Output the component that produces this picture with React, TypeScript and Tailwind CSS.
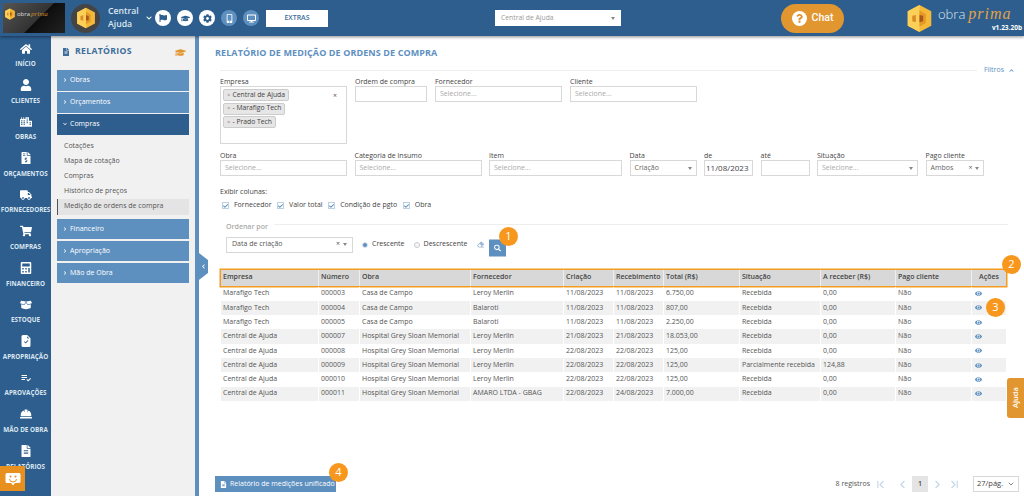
import type { ReactNode } from "react";
import {
  FaHome, FaUser, FaCity, FaFileInvoiceDollar, FaTruck, FaShoppingCart, FaCalculator, FaBoxOpen,
  FaFileAlt, FaHardHat, FaGraduationCap, FaFlag, FaCog, FaMobileAlt, FaDesktop, FaEye, FaSearch,
  FaEraser, FaQuestion, FaChevronDown, FaChevronUp, FaChevronRight, FaChevronLeft, FaCheck,
} from "react-icons/fa";
import { BsFileEarmarkCheckFill } from "react-icons/bs";
import { MdPlaylistAddCheck } from "react-icons/md";
import { LuChevronFirst, LuChevronLast, LuChevronLeft, LuChevronRight, LuChevronDown } from "react-icons/lu";

const navItems = [
  { label: "INÍCIO", icon: <FaHome /> },
  { label: "CLIENTES", icon: <FaUser /> },
  { label: "OBRAS", icon: <FaCity /> },
  { label: "ORÇAMENTOS", icon: <FaFileInvoiceDollar /> },
  { label: "FORNECEDORES", icon: <FaTruck /> },
  { label: "COMPRAS", icon: <FaShoppingCart /> },
  { label: "FINANCEIRO", icon: <FaCalculator /> },
  { label: "ESTOQUE", icon: <FaBoxOpen /> },
  { label: "APROPRIAÇÃO", icon: <BsFileEarmarkCheckFill /> },
  { label: "APROVAÇÕES", icon: <MdPlaylistAddCheck /> },
  { label: "MÃO DE OBRA", icon: <FaHardHat /> },
  { label: "RELATÓRIOS", icon: <FaFileAlt /> },
];

const rows = [
  ["Marafigo Tech", "000003", "Casa de Campo", "Leroy Merlin", "11/08/2023", "11/08/2023", "6.750,00", "Recebida", "0,00", "Não"],
  ["Marafigo Tech", "000004", "Casa de Campo", "Balaroti", "11/08/2023", "11/08/2023", "807,00", "Recebida", "0,00", "Não"],
  ["Marafigo Tech", "000005", "Casa de Campo", "Balaroti", "11/08/2023", "11/08/2023", "2.250,00", "Recebida", "0,00", "Não"],
  ["Central de Ajuda", "000007", "Hospital Grey Sloan Memorial", "Leroy Merlin", "21/08/2023", "21/08/2023", "18.053,00", "Recebida", "0,00", "Não"],
  ["Central de Ajuda", "000008", "Hospital Grey Sloan Memorial", "Leroy Merlin", "22/08/2023", "22/08/2023", "125,00", "Recebida", "0,00", "Não"],
  ["Central de Ajuda", "000009", "Hospital Grey Sloan Memorial", "Leroy Merlin", "22/08/2023", "22/08/2023", "125,00", "Parcialmente recebida", "124,88", "Não"],
  ["Central de Ajuda", "000010", "Hospital Grey Sloan Memorial", "Leroy Merlin", "22/08/2023", "22/08/2023", "125,00", "Recebida", "0,00", "Não"],
  ["Central de Ajuda", "000011", "Hospital Grey Sloan Memorial", "AMARO LTDA - GBAG", "22/08/2023", "24/08/2023", "7.000,00", "Recebida", "0,00", "Não"],
];

const columns = ["Empresa", "Número", "Obra", "Fornecedor", "Criação", "Recebimento", "Total (R$)", "Situação", "A receber (R$)", "Pago cliente"];

const tableGrid = "grid grid-cols-[98px_41px_111px_93px_50px_50px_76px_81px_75px_76px_34px]";

function Logo({ className }: { className: string }) {
  return (
    <svg viewBox="0 0 32 32" className={className}>
      <polygon points="16,1 29,8 29,24 16,31 3,24 3,8" fill="#f5b93a" />
      <polygon points="16,1 16,31 3,24 3,8" fill="#fbcf58" />
      <polygon points="16,7 23,11 23,21 16,25" fill="#e59a26" />
      <polygon points="16,12 20,13 20,19 16,20" fill="#a9581c" />
      <polygon points="8,13 12,12 12,20 8,19" fill="#d98c25" />
    </svg>
  );
}

function Badge({ n, className }: { n: number; className: string }) {
  return (
    <div className={`absolute flex h-[19px] w-[19px] items-center justify-center rounded-full bg-[#f7971d] text-[11px] text-white ${className}`}>
      {n}
    </div>
  );
}

function Field({ label, width, children }: { label: string; width: string; children?: ReactNode }) {
  return (
    <div className={`flex flex-col ${width}`}>
      <span className="h-[11px] text-[7px] leading-[11px] text-[#444]">{label}</span>
      <div className="mt-[-1px] flex h-[16px] items-center justify-between border border-[#d8d8d8] bg-white px-[4px] text-[7px] text-[#aaa]">
        {children}
      </div>
    </div>
  );
}

function Caret() {
  return <span className="h-0 w-0 border-x-[2px] border-t-[3px] border-x-transparent border-t-[#888]" />;
}

function Tag({ children }: { children: ReactNode }) {
  return (
    <span className="flex h-[12px] w-fit items-center gap-[2px] rounded-[2px] border border-[#ccc] bg-[#e6e6e6] px-[3px] text-[6.8px] text-[#444]">
      <span className="text-[6px] text-[#888]">×</span>
      {children}
    </span>
  );
}

function Accordion({ label, open }: { label: string; open?: boolean }) {
  return (
    <div className={`flex h-[20.5px] items-center gap-[3px] px-[6px] text-[7px] text-white ${open ? "bg-[#2d5e8e]" : "bg-[#5e90bf]"}`}>
      {open ? <FaChevronDown className="text-[4px]" /> : <FaChevronRight className="text-[4px]" />}
      {label}
    </div>
  );
}

function Check({ label }: { label: string }) {
  return (
    <span className="flex items-center gap-[5px]">
      <span className="flex h-[7px] w-[7px] items-center justify-center border border-[#bcd0e4] bg-white text-[6px] text-[#5e90bf]">
        <FaCheck />
      </span>
      {label}
    </span>
  );
}

export default function App() {
  return (
    <div className="relative flex h-[496px] w-[1024px] flex-col overflow-hidden bg-white font-['Open_Sans',sans-serif]">
      <header className="z-10 flex h-[36px] shrink-0 items-center bg-[#2d5e8e] shadow-[0_1px_3px_rgba(0,0,0,0.45)]">
        <div className="ml-[3px] flex h-[30px] w-[62px] items-center gap-[1px] bg-[linear-gradient(135deg,#555_0%,#333_55%,#0d0d0d_56%,#222_100%)] px-[1px] pb-[8px]">
          <Logo className="h-[12px] w-[12px]" />
          <span className="text-[6px] text-[#ddd]">obra</span>
          <span className="font-['Liberation_Serif',serif] text-[7px] italic text-[#c98a2b]">prima</span>
        </div>
        <div className="ml-[6px] flex h-[29px] w-[29px] items-center justify-center rounded-full bg-[#444]">
          <Logo className="h-[22px] w-[22px]" />
        </div>
        <div className="ml-[8px] w-[38px] text-[8.7px] leading-[13px] font-semibold text-[#dbe6f0]">Central Ajuda</div>
        <FaChevronDown className="text-[6px] text-white" />
        <div className="ml-[3px] flex items-center gap-[6px]">
          <span className="flex h-[16px] w-[16px] items-center justify-center rounded-full bg-white text-[8px] text-[#2d5e8e]"><FaFlag /></span>
          <span className="flex h-[16px] w-[16px] items-center justify-center rounded-full bg-white text-[9px] text-[#2d5e8e]"><FaGraduationCap /></span>
          <span className="flex h-[16px] w-[16px] items-center justify-center rounded-full bg-white text-[9px] text-[#2d5e8e]"><FaCog /></span>
          <span className="flex h-[16px] w-[16px] items-center justify-center rounded-full bg-[#5e90bf] text-[9px] text-white"><FaMobileAlt /></span>
          <span className="flex h-[16px] w-[16px] items-center justify-center rounded-full bg-[#5e90bf] text-[9px] text-white"><FaDesktop /></span>
        </div>
        <div className="ml-[7px] flex h-[17px] w-[62px] items-center justify-center bg-white text-[7px] font-semibold text-[#3d6d9a]">EXTRAS</div>
        <div className="ml-[167px] flex h-[16px] w-[126px] items-center justify-between bg-white px-[6px] text-[6.8px] text-[#999]">
          Central de Ajuda
          <Caret />
        </div>
        <div className="ml-[160px] flex h-[29px] w-[63px] items-center justify-center gap-[5px] rounded-full bg-[#e2962f] font-['Roboto',sans-serif] text-[10.5px] font-medium text-white">
          <span className="flex h-[15px] w-[15px] items-center justify-center rounded-full bg-white text-[9px] text-[#e2962f]"><FaQuestion /></span>
          Chat
        </div>
        <Logo className="ml-[61px] h-[29px] w-[29px]" />
        <div className="ml-[4px] flex w-[84px] flex-col items-end">
          <div className="flex h-[20px] w-full items-center">
            <span className="text-[13px] leading-none font-light text-[#dbe6f0]">obra</span>
            <span className="ml-[3px] font-['Liberation_Serif',serif] text-[16px] leading-none tracking-[1px] text-[#e2a24a] italic">prima</span>
          </div>
          <span className="text-[6.5px] leading-[8px] font-bold text-white">v1.23.20b</span>
        </div>
      </header>

      <div className="relative flex min-h-0 flex-1">
        <nav className="flex w-[51px] shrink-0 flex-col overflow-hidden bg-[#2d5e8e] pt-[3px]">
          {navItems.map((item) => (
            <div key={item.label} className="flex h-[36.6px] shrink-0 flex-col items-center justify-start">
              <span className="flex h-[19px] items-center text-[12px] text-white">{item.icon}</span>
              <span className="text-[6.3px] leading-[11px] font-bold whitespace-nowrap text-[#dbe6f0]">{item.label}</span>
            </div>
          ))}
        </nav>

        <aside className="w-[144px] shrink-0 bg-[#f1f1f1] px-[6px]">
          <div className="flex h-[34px] items-center justify-between pr-[3px] pb-[2px] pl-[5px]">
            <span className="flex items-center gap-[5px] text-[8.7px] font-bold tracking-[0.3px] text-[#3d6d9a]">
              <FaFileAlt className="text-[8px]" />
              RELATÓRIOS
            </span>
            <FaGraduationCap className="text-[11px] text-[#e2962f]" />
          </div>
          <div className="flex flex-col gap-[1.5px]">
            <Accordion label="Obras" />
            <Accordion label="Orçamentos" />
            <Accordion label="Compras" open />
          </div>
          <div className="mt-[4px] flex flex-col text-[7px] text-[#555]">
            <span className="flex h-[15px] items-center pl-[7px]">Cotações</span>
            <span className="flex h-[15px] items-center pl-[7px]">Mapa de cotação</span>
            <span className="flex h-[15px] items-center pl-[7px]">Compras</span>
            <span className="flex h-[15px] items-center pl-[7px]">Histórico de preços</span>
            <span className="flex h-[16px] items-center border-l border-[#555] bg-[#e4e4e4] pl-[6px]">Medição de ordens de compra</span>
          </div>
          <div className="mt-[4px] flex flex-col gap-[1.5px]">
            <Accordion label="Financeiro" />
            <Accordion label="Apropriação" />
            <Accordion label="Mão de Obra" />
          </div>
        </aside>

        <div className="w-[4px] shrink-0 bg-[#5e90bf]" />

        <main className="relative min-w-0 flex-1 px-[16px] text-[#555]">
          <h1 className="pt-[11px] text-[9px] leading-[12px] font-bold tracking-[0.1px] text-[#5e90bf]">RELATÓRIO DE MEDIÇÃO DE ORDENS DE COMPRA</h1>
          <div className="mt-[6px] mr-[-6px] ml-[5px] flex h-[10px] items-center">
            <div className="h-px flex-1 bg-[#eee]" />
            <span className="ml-[7px] flex items-center gap-[5px] text-[7px] text-[#5e90bf]">
              Filtros <FaChevronUp className="text-[5px]" />
            </span>
          </div>

          <div className="mt-[1px] ml-[5px] flex gap-[8px]">
            <div className="flex w-[127px] flex-col">
              <span className="h-[11px] text-[7px] leading-[11px] text-[#444]">Empresa</span>
              <div className="relative mt-[-1px] flex h-[58px] flex-col gap-[1.5px] border border-[#d8d8d8] p-[2px]">
                <Tag>Central de Ajuda</Tag>
                <Tag>- Marafigo Tech</Tag>
                <Tag>- Prado Tech</Tag>
                <span className="absolute top-[4px] right-[9px] text-[7px] text-[#555]">×</span>
              </div>
            </div>
            <Field label="Ordem de compra" width="w-[72px]" />
            <Field label="Fornecedor" width="w-[127px]">Selecione...</Field>
            <Field label="Cliente" width="w-[127px]">Selecione...</Field>
          </div>

          <div className="mt-[6px] ml-[5px] flex gap-[7.5px]">
            <Field label="Obra" width="w-[127px]">Selecione...</Field>
            <Field label="Categoria de insumo" width="w-[127px]">Selecione...</Field>
            <Field label="Item" width="w-[133px]">Selecione...</Field>
            <Field label="Data" width="w-[67px]"><span className="text-[#666]">Criação</span> <Caret /></Field>
            <Field label="de" width="w-[49px]"><span className="-mx-[3px] text-[8px] whitespace-nowrap text-[#444]">11/08/2023</span></Field>
            <Field label="até" width="w-[49px]" />
            <Field label="Situação" width="w-[101px]">Selecione... <Caret /></Field>
            <Field label="Pago cliente" width="w-[58px]">
              <span className="text-[#666]">Ambos</span>
              <span className="flex items-center gap-[2px] text-[#666]"><span className="text-[7px]">×</span><Caret /></span>
            </Field>
          </div>

          <div className="mt-[10px] ml-[5px] text-[7px] leading-[11px] text-[#444]">Exibir colunas:</div>
          <div className="mt-[3px] ml-[7px] flex h-[11px] items-center gap-[5.5px] text-[7px] text-[#444]">
            <Check label="Fornecedor" />
            <Check label="Valor total" />
            <Check label="Condição de pgto" />
            <Check label="Obra" />
          </div>

          <div className="mt-[9.5px] ml-[11px] flex h-[11px] items-center">
            <span className="text-[7px] leading-[11px] font-semibold text-[#aaa]">Ordenar por</span>
            <div className="ml-[6px] h-px flex-1 translate-y-[-2px] bg-[#eee]" />
          </div>
          <div className="mt-[5px] ml-[11px] flex h-[16px] items-center text-[7px] text-[#444]">
            <div className="flex h-[16px] w-[127px] items-center justify-between border border-[#d8d8d8] px-[5px] text-[#555]">
              Data de criação
              <span className="flex items-center gap-[3px]"><span className="text-[7px]">×</span><Caret /></span>
            </div>
            <span className="ml-[9px] h-[6px] w-[6px] rounded-full border-[1.5px] border-[#dde6ef] bg-[#5e90bf]" />
            <span className="ml-[4px]">Crescente</span>
            <span className="ml-[9px] h-[6px] w-[6px] rounded-full border border-[#ccc] bg-[#f5f5f5]" />
            <span className="ml-[4px]">Descrescente</span>
            <FaEraser className="ml-[10px] text-[7px] text-[#9db9d6]" />
            <div className="ml-[5px] flex h-[17px] w-[17px] translate-y-[3.5px] items-center justify-center bg-[#5e90bf] text-[7px] text-white"><FaSearch /></div>
          </div>

          <div className="mt-[17px] ml-[6px] w-[785px] text-[7px] text-[#555]">
            <div className={`${tableGrid} h-[16px] items-center bg-[#d8d8d8] font-semibold text-[#444] shadow-[0_0_0_1.5px_#f39c1f]`}>
              {columns.map((c) => (
                <span key={c} className="flex h-full items-center border-r border-white/60 pl-[2px] whitespace-nowrap">{c}</span>
              ))}
              <span className="text-center">Ações</span>
            </div>
            <div className="pt-[1px]">
              {rows.map((row, i) => (
                <div key={row[1]} className={`${tableGrid} h-[14.3px] items-center ${i % 2 ? "bg-[#f1f1f1]" : ""}`}>
                  {row.map((cell, j) => (
                    <span key={j} className="flex h-full items-center border-r border-white pl-[2px] whitespace-nowrap">{cell}</span>
                  ))}
                  <span className="flex justify-start pl-[3px] text-[7px] text-[#5e90bf]"><FaEye /></span>
                </div>
              ))}
            </div>
          </div>

          <div className="absolute right-[5px] bottom-[4px] left-[16px] flex items-center">
            <div className="flex h-[16px] w-[121px] items-center gap-[3px] bg-[#5e90bf] pl-[5px] text-[7px] whitespace-nowrap text-white">
              <FaFileAlt className="text-[7px]" />
              Relatório de medições unificado
            </div>
            <span className="ml-auto text-[7px] text-[#555]">8 registros</span>
            <div className="ml-[4px] flex items-center text-[13px] text-[#c5d6e8]">
              <LuChevronFirst />
              <LuChevronLeft className="ml-[9px]" />
              <span className="ml-[3px] flex h-[16px] w-[16px] items-center justify-center bg-[#e4e4e4] text-[7px] font-semibold text-[#444]">1</span>
              <LuChevronRight className="ml-[3px]" />
              <LuChevronLast className="ml-[4px]" />
            </div>
            <div className="ml-[12px] flex h-[16px] w-[46px] items-center justify-between border border-[#d8d8d8] px-[3px] text-[7.5px] text-[#444]">
              27/pág.
              <LuChevronDown className="text-[8px]" />
            </div>
          </div>

          <Badge n={1} className="top-[191px] left-[300px]" />
          <Badge n={2} className="top-[219px] left-[803px]" />
          <Badge n={3} className="top-[262px] left-[787px]" />
          <Badge n={4} className="top-[427px] left-[130px]" />

          <div className="absolute top-[342px] right-0 flex h-[40px] w-[17px] items-center justify-center rounded-l-[3px] bg-[#e2962f] text-[7.5px] font-semibold text-white">
            <span className="-rotate-90">Ajuda</span>
          </div>
        </main>

        <div className="absolute top-[214px] left-[195px] flex h-[33px] w-[13px] items-center justify-start bg-[#5e90bf] pl-[6px] text-[5px] text-white [clip-path:polygon(0_0,100%_30%,100%_70%,0_100%)]">
          <FaChevronLeft />
        </div>

        <div className="absolute top-[430px] left-0 flex h-[25px] w-[25px] items-center justify-center bg-[#e8901e]">
          <svg viewBox="0 0 16 16" className="h-[16px] w-[16px]">
            <path d="M2 2h12a1.5 1.5 0 0 1 1.5 1.5v7A1.5 1.5 0 0 1 14 12h-4l-2 2.5L6 12H2a1.5 1.5 0 0 1-1.5-1.5v-7A1.5 1.5 0 0 1 2 2z" fill="#fff" />
            <circle cx="5.5" cy="5.5" r="1" fill="#e8901e" />
            <circle cx="10.5" cy="5.5" r="1" fill="#e8901e" />
            <path d="M4.5 8a3.5 3 0 0 0 7 0" fill="none" stroke="#e8901e" strokeWidth="1" />
          </svg>
        </div>
      </div>
    </div>
  );
}
